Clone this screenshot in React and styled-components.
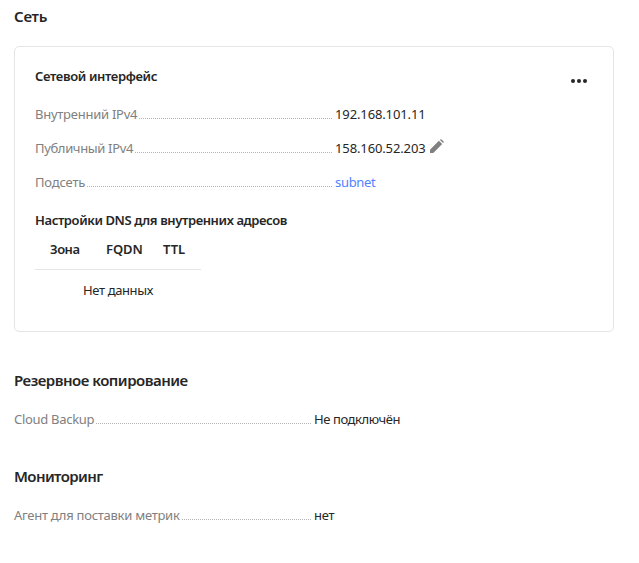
import React from 'react';
import styled, { createGlobalStyle } from 'styled-components';

const Global = createGlobalStyle`
  * { box-sizing: border-box; }
  body { margin: 0; background: #fff; color: #262626; font: 13px/18px "Noto Sans", "Open Sans", sans-serif; }
`;
const Page = styled.main`
  width: 639px;
  height: 563px;
  padding: 6px 25px 0 14px;
  overflow: hidden;
`;
const Title = styled.h2`
  margin: 0 0 20px;
  font-size: 15px;
  line-height: 20px;
  font-weight: 600;
`;
const Card = styled.section`
  height: 286px;
  margin-bottom: 38px;
  padding: 20px;
  border: 1px solid #e5e5e5;
  border-radius: 5px;
`;
const CardHeader = styled.header`
  display: flex;
  justify-content: space-between;
  height: 38px;
`;
const Subtitle = styled.h3`
  margin: 0;
  font-size: 13px;
  line-height: 18px;
  font-weight: 600;
`;
const MenuButton = styled.button`
  width: 28px;
  height: 28px;
  padding: 0;
  border: 0;
  color: #262626;
  background: none;
  svg { display: block; }
`;
const EditButton = styled.button`
  display: block;
  width: 15px;
  height: 15px;
  margin: 0 0 0 4px;
  padding: 0;
  border: 0;
  color: #808080;
  background: none;
  svg { display: block; }
`;
const Row = styled.div`
  display: flex;
  height: ${p => p.$height || 34}px;
`;
const Label = styled.span`
  display: flex;
  width: 297px;
  margin-right: 3px;
  color: #808080;
  &::after {
    content: '';
    flex: 1;
    height: 13px;
    margin-left: 2px;
    border-bottom: 1px dotted #b3b3b3;
  }
`;
const Text = styled.span`
  display: inline-block;
  white-space: nowrap;
  letter-spacing: ${p => p.$track || 0}px;
`;
const Link = styled(Text).attrs({ as: 'a' })`
  color: #5282ff;
`;
const DnsSection = styled.section`
  padding-top: 4px;
`;
const Table = styled.table`
  width: 166px;
  margin-top: 3px;
  border-collapse: collapse;
  table-layout: fixed;
`;
const HeadCell = styled.th`
  width: ${p => p.$width}px;
  height: 37px;
  padding: 0 0 2px ${p => p.$left || 0}px;
  text-align: left;
  font-weight: 600;
  border-bottom: 1px solid #e5e5e5;
`;
const EmptyCell = styled.td`
  height: 42px;
  padding: 0;
  text-align: center;
`;

const Field = ({ label, track, height, children }) => (
  <Row $height={height}>
    <Label><Text $track={track}>{label}</Text></Label>
    {children}
  </Row>
);

const DotsIcon = () => (
  <svg width="28" height="28" viewBox="0 0 28 28" fill="currentColor">
    <circle cx="8" cy="14" r="2" />
    <circle cx="14" cy="14" r="2" />
    <circle cx="20" cy="14" r="2" />
  </svg>
);

const PencilIcon = () => (
  <svg width="15" height="15" viewBox="0 0 15 15" fill="currentColor">
    <path d="M0 14V10.7L8.9 1.8l3.3 3.3L3.3 14zM9.9.9l.5-.5a.8.8 0 0 1 1.1 0l2.1 2.1a.8.8 0 0 1 0 1.1l-.5.5z" />
  </svg>
);

export default function App() {
  return (
    <>
      <Global />
      <Page>
        <Title><Text $track={-0.25}>Сеть</Text></Title>
        <Card>
          <CardHeader>
            <Subtitle><Text $track={-0.36}>Сетевой интерфейс</Text></Subtitle>
            <MenuButton aria-label="Действия"><DotsIcon /></MenuButton>
          </CardHeader>
          <Field label="Внутренний IPv4" track={-0.25}><Text $track={-0.12}>192.168.101.11</Text></Field>
          <Field label="Публичный IPv4" track={-0.35}>
            <Text $track={-0.12}>158.160.52.203</Text>
            <EditButton aria-label="Изменить"><PencilIcon /></EditButton>
          </Field>
          <Field label="Подсеть" track={-0.17}><Link $track={-0.3}>subnet</Link></Field>
          <DnsSection>
            <Subtitle><Text $track={-0.4}>Настройки DNS для внутренних адресов</Text></Subtitle>
            <Table>
              <thead>
                <tr>
                  <HeadCell $width={71} $left={15}><Text $track={-0.5}>Зона</Text></HeadCell>
                  <HeadCell $width={57}><Text $track={-0.1}>FQDN</Text></HeadCell>
                  <HeadCell $width={38}><Text>TTL</Text></HeadCell>
                </tr>
              </thead>
              <tbody>
                <tr><EmptyCell colSpan={3}><Text $track={-0.38}>Нет данных</Text></EmptyCell></tr>
              </tbody>
            </Table>
          </DnsSection>
        </Card>
        <Title><Text $track={-0.5}>Резервное копирование</Text></Title>
        <Field label="Cloud Backup" track={-0.3} height={56}><Text $track={-0.42}>Не подключён</Text></Field>
        <Title><Text $track={-0.6}>Мониторинг</Text></Title>
        <Field label="Агент для поставки метрик" track={-0.26}><Text $track={-0.3}>нет</Text></Field>
      </Page>
    </>
  );
}
